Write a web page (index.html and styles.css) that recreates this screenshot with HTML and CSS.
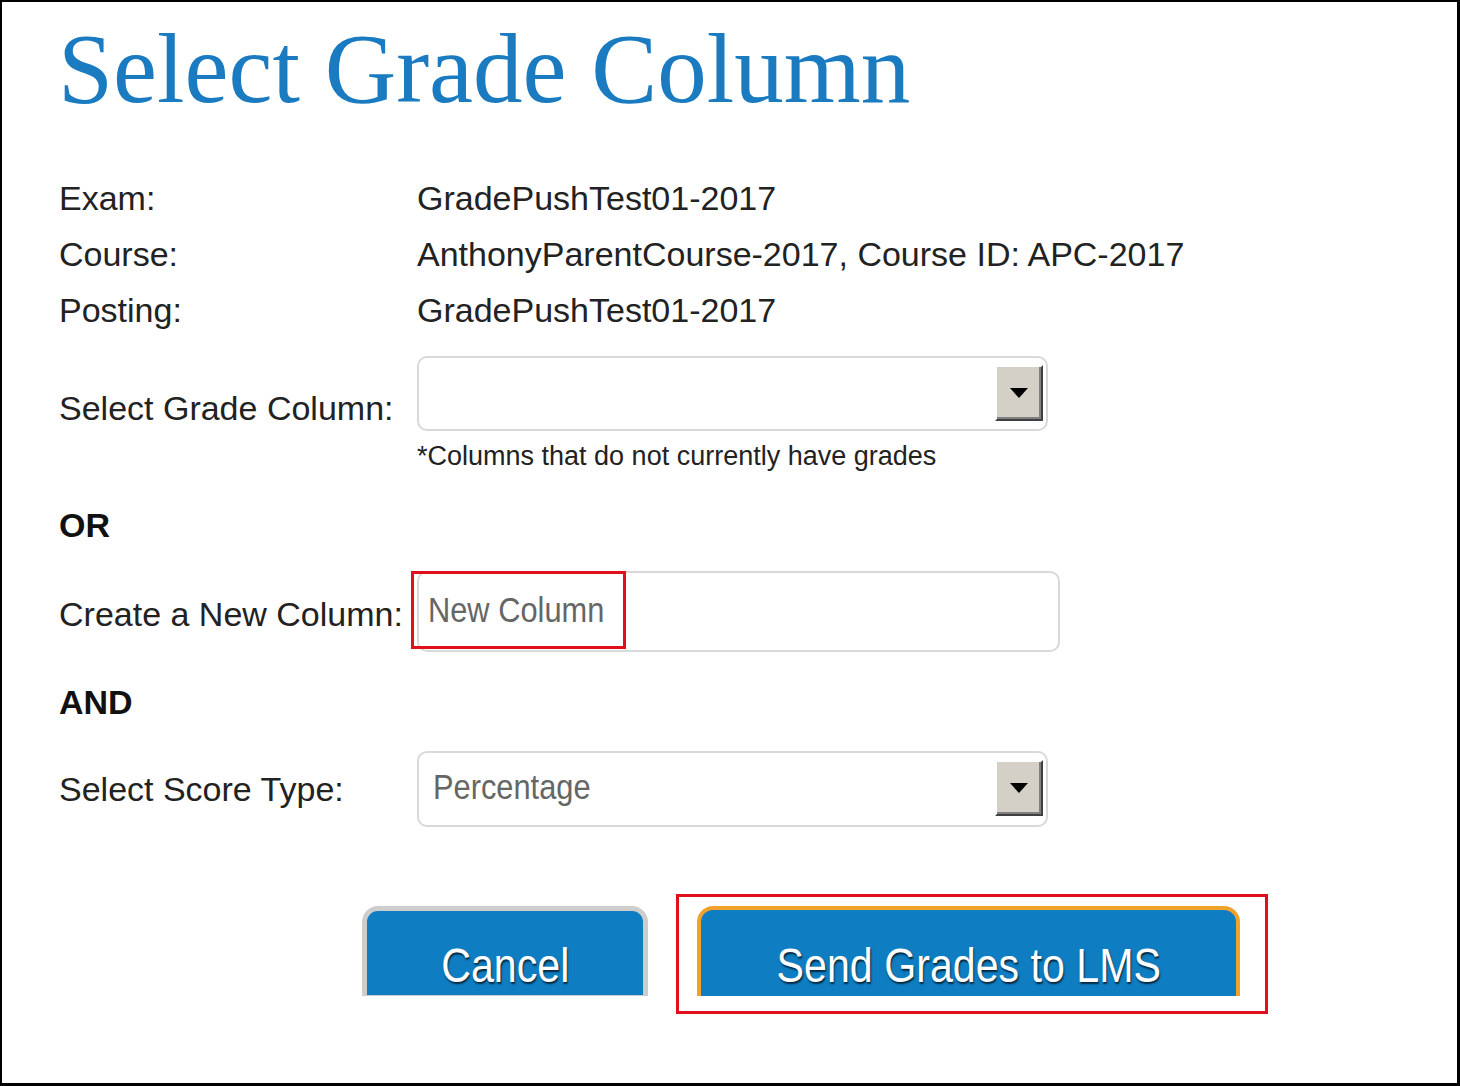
FILE: index.html
```html
<!DOCTYPE html>
<html lang="en">
<head>
    <meta charset="UTF-8">
    <title>Select Grade Column</title>
    <link rel="stylesheet" href="styles.css">
</head>
<body>
    <div class="frame">
        <h1 class="title">Select Grade Column</h1>

        <!-- Exam details -->
        <div class="info">
            <div class="info-row">
                <span class="info-label">Exam:</span>
                <span class="info-value">GradePushTest01-2017</span>
            </div>
            <div class="info-row">
                <span class="info-label">Course:</span>
                <span class="info-value">AnthonyParentCourse-2017, Course ID: APC-2017</span>
            </div>
            <div class="info-row">
                <span class="info-label">Posting:</span>
                <span class="info-value">GradePushTest01-2017</span>
            </div>
        </div>

        <div class="field field-grade">
            <label class="field-label">Select Grade Column:</label>
            <div class="control">
                <div class="select">
                    <span class="select-text"></span>
                    <span class="select-btn">
                        <svg width="18" height="10" viewBox="0 0 18 10"><polygon points="0,0 18,0 9,10" fill="#000"/></svg>
                    </span>
                </div>
                <p class="note">*Columns that do not currently have grades</p>
            </div>
        </div>

        <div class="divider divider-or">OR</div>

        <div class="field field-new">
            <label class="field-label">Create a New Column:</label>
            <div class="control">
                <div class="textbox">
                    <span class="placeholder">New Column</span>
                    <span class="mark"></span>
                </div>
            </div>
        </div>

        <div class="divider divider-and">AND</div>

        <div class="field field-score">
            <label class="field-label">Select Score Type:</label>
            <div class="control">
                <div class="select">
                    <span class="select-text">Percentage</span>
                    <span class="select-btn">
                        <svg width="18" height="10" viewBox="0 0 18 10"><polygon points="0,0 18,0 9,10" fill="#000"/></svg>
                    </span>
                </div>
            </div>
        </div>

        <div class="actions">
            <button class="btn btn-cancel"><span class="btn-text">Cancel</span></button>
            <div class="mark-box">
                <button class="btn btn-send"><span class="btn-text">Send Grades to LMS</span></button>
            </div>
        </div>
    </div>
</body>
</html>
```

FILE: styles.css
```css
body {
    margin: 0;
    padding: 0;
    background-color: #fff;
    color: #222;
    font-family: "Liberation Sans", Arial, sans-serif;
}
.frame {
    box-sizing: border-box;
    width: 1460px;
    height: 1086px;
    border-style: solid;
    border-color: #000;
    border-width: 2px 3px 3px 2px;
    padding: 12px 0 0 57px;
}
.title {
    margin: 0 0 0 -1px;
    font-family: "Liberation Serif", "Times New Roman", serif;
    font-size: 99px;
    font-weight: normal;
    line-height: 110px;
    color: #1a7bc0;
}
.info {
    margin-top: 46px;
}
.info-row {
    display: grid;
    grid-template-columns: 358px 1fr;
    font-size: 34px;
    line-height: 56px;
}
.field {
    display: flex;
    align-items: flex-start;
}
.field-label {
    flex: none;
    width: 358px;
    font-size: 34px;
    line-height: 56px;
}
.field-grade {
    margin-top: 18px;
}
.field-grade .field-label {
    margin-top: 24px;
}
.field-new {
    margin-top: 18px;
}
.field-new .field-label {
    margin-top: 15px;
}
.field-score {
    margin-top: 21px;
}
.field-score .field-label {
    margin-top: 10px;
}
.select {
    box-sizing: border-box;
    width: 631px;
    height: 75px;
    border: 2px solid #d9d9d9;
    border-radius: 10px;
    display: flex;
    align-items: flex-start;
    justify-content: space-between;
    padding: 7px 3px 0 14px;
}
.field-score .select {
    height: 76px;
}
.select-text,
.placeholder {
    display: inline-block;
    font-size: 35px;
    line-height: 40px;
    color: #666;
    transform: scaleX(0.88);
    transform-origin: left center;
}
.select-text {
    margin-top: 7px;
}
.select-btn {
    box-sizing: border-box;
    width: 48px;
    height: 56px;
    background-color: #d4d0c8;
    border-style: solid;
    border-width: 2px;
    border-color: #fff #404040 #404040 #fff;
    box-shadow: inset -2px -2px 0 #808080;
    display: flex;
    align-items: center;
    justify-content: center;
}
.note {
    margin: 8px 0 0 0;
    font-size: 27px;
    line-height: 34px;
}
.divider {
    font-size: 34px;
    font-weight: bold;
    line-height: 56px;
    color: #111;
}
.divider-or {
    margin-top: 24px;
}
.divider-and {
    margin-top: 22px;
}
.textbox {
    position: relative;
    box-sizing: border-box;
    width: 643px;
    height: 81px;
    border: 2px solid #d9d9d9;
    border-radius: 10px;
    padding: 17px 0 0 9px;
}
.mark {
    position: absolute;
    left: -8px;
    top: -2px;
    width: 215px;
    height: 78px;
    box-sizing: border-box;
    border: 3px solid #e3101b;
}
.actions {
    display: flex;
    align-items: flex-start;
    gap: 28px;
    margin-top: 67px;
    padding-left: 303px;
}
.btn {
    box-sizing: border-box;
    height: 90px;
    margin: 0;
    padding: 24px 0 0 0;
    background-color: #0f7dc2;
    color: #fff;
    font-family: "Liberation Sans", Arial, sans-serif;
    font-size: 49px;
    line-height: 58px;
    text-shadow: 1px 2px 2px rgba(0, 0, 0, 0.7);
    border-style: solid;
    border-width: 5px 5px 0 5px;
    border-radius: 16px 16px 0 0;
    border-bottom: 1px solid #cfe3f1;
    cursor: pointer;
}
.btn-text {
    display: inline-block;
    transform: scaleX(0.84);
}
.btn-cancel {
    width: 286px;
    margin-top: 12px;
    border-color: #cdcdcd;
}
.btn-send {
    width: 543px;
    border-color: #f0a22c;
    border-width: 4px 4px 0 4px;
}
.mark-box {
    border: 3px solid #e3101b;
    padding: 9px 25px 15px 18px;
}
```
